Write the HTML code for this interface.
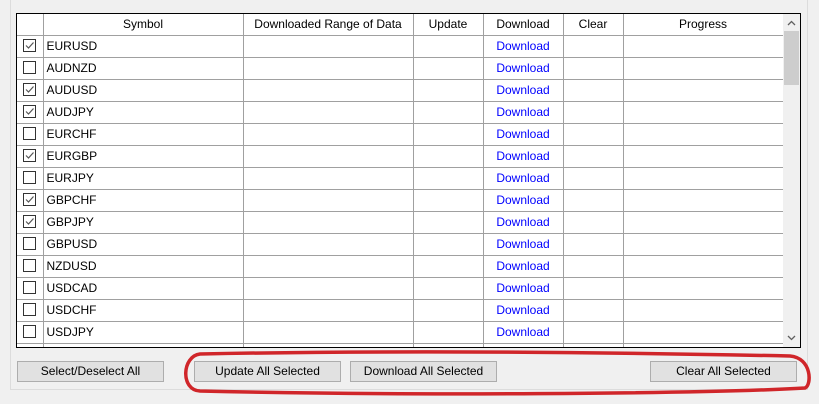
<!DOCTYPE html>
<html><head><style>
body{margin:0;width:819px;height:404px;background:#f0f0f0;position:relative;overflow:hidden;font-family:"Liberation Sans",sans-serif;font-size:12px;color:#000}
.abs{position:absolute}
table{border-collapse:collapse;table-layout:fixed;background:#fff;font-size:12px;font-family:"Liberation Sans",sans-serif}
td{border:1px solid #a0a0a0;height:22px;padding:0;white-space:nowrap;overflow:hidden;box-sizing:border-box;line-height:20px}
th{border:1px solid #a0a0a0;font-weight:normal;height:21px;padding:0;box-sizing:border-box;white-space:nowrap;overflow:hidden;line-height:19px}
td.s{padding-left:3px}
td.d{text-align:center;color:#0000ff}
.cb{display:inline-block;width:11px;height:11px;border:1px solid #333;margin-left:6px;vertical-align:middle;position:relative;background:#fff;top:-1px}
.btn{position:absolute;top:361px;height:19px;width:145px;background:#e1e1e1;border:1px solid #adadad;text-align:center;line-height:19px}
</style></head><body>
<div class="abs" style="left:10px;top:0;width:1px;height:390px;background:#dcdcdc"></div>
<div class="abs" style="left:10px;top:389px;width:798px;height:1px;background:#dcdcdc"></div>
<div class="abs" style="left:807px;top:0;width:1px;height:390px;background:#dcdcdc"></div>
<div class="abs" style="left:16px;top:13px;width:783px;height:333px;border:1px solid #000;background:#fff;overflow:hidden">
<table style="width:766px">
<colgroup><col style="width:26px"><col style="width:200px"><col style="width:170px"><col style="width:70px"><col style="width:80px"><col style="width:60px"><col style="width:160px"></colgroup>
<tr><th style="border-top:0;border-left:0"></th><th style="border-top:0">Symbol</th><th style="border-top:0">Downloaded Range of Data</th><th style="border-top:0">Update</th><th style="border-top:0">Download</th><th style="border-top:0">Clear</th><th style="border-top:0">Progress</th></tr>
<tbody id="b"></tbody>
</table>
<div class="abs" style="left:766px;top:0;width:17px;height:333px;background:#f0f0f0"></div>
<div class="abs" style="left:767px;top:17px;width:15px;height:54px;background:#cdcdcd"></div>
<svg class="abs" style="left:766px;top:0" width="17" height="333"><path d="M5 11 L8.5 7.5 L12 11" stroke="#606060" stroke-width="1.3" fill="none"/><path d="M5 322 L8.5 325.5 L12 322" stroke="#606060" stroke-width="1.3" fill="none"/></svg>
</div>
<script>
var s=[["EURUSD",1],["AUDNZD",0],["AUDUSD",1],["AUDJPY",1],["EURCHF",0],["EURGBP",1],["EURJPY",0],["GBPCHF",1],["GBPJPY",1],["GBPUSD",0],["NZDUSD",0],["USDCAD",0],["USDCHF",0],["USDJPY",0],["",0]];
var h="";s.forEach(function(r){h+='<tr><td style="border-left:0">'+(r[0]?'<span class="cb">'+(r[1]?'<svg width="11" height="11" style="position:absolute;left:0;top:0"><path d="M2 5.5 L4.5 8 L9.5 2.5" stroke="#555" stroke-width="1.2" fill="none"/></svg>':'')+'</span>':'')+'</td><td class="s">'+r[0]+'</td><td></td><td></td><td class="d">'+(r[0]?'Download':'')+'</td><td></td><td></td></tr>'});
document.getElementById("b").innerHTML=h;
</script>
<div class="btn" style="left:17px">Select/Deselect All</div>
<div class="btn" style="left:194px">Update All Selected</div>
<div class="btn" style="left:350px">Download All Selected</div>
<div class="btn" style="left:650px">Clear All Selected</div>
<svg class="abs" style="left:0;top:0" width="819" height="404"><path d="M200 354 C400 350 600 352 790 356 C812 358 812 385 805 388 C700 394 400 396 200 391 C180 390 182 356 200 354 Z" stroke="#d0262a" stroke-width="3.5" fill="none"/></svg>
</body></html>
